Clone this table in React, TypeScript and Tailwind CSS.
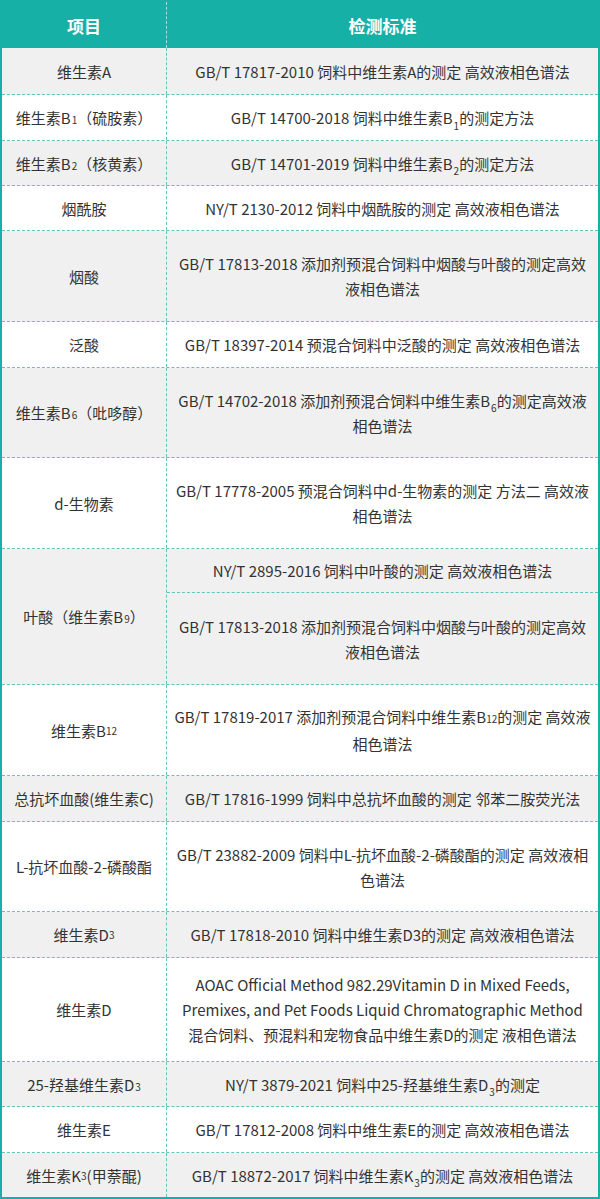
import type { ReactNode } from "react";

const Sub = ({ children }: { children: ReactNode }) => (
  <sub className="text-[10px] leading-none align-[-3px] ml-[1px]">{children}</sub>
);

type Row = { name: ReactNode; std: ReactNode[]; h: string; last?: boolean };

const rows: Row[] = [
  { name: "维生素A", std: ["GB/T 17817-2010 饲料中维生素A的测定 高效液相色谱法"], h: "h-[47px]" },
  {
    name: <>维生素B<Sub>1</Sub>（硫胺素）</>,
    std: [<>GB/T 14700-2018 饲料中维生素B<Sub>1</Sub>的测定方法</>],
    h: "h-[46px]",
  },
  {
    name: <>维生素B<Sub>2</Sub>（核黄素）</>,
    std: [<>GB/T 14701-2019 饲料中维生素B<Sub>2</Sub>的测定方法</>],
    h: "h-[45px]",
  },
  { name: "烟酰胺", std: ["NY/T 2130-2012 饲料中烟酰胺的测定 高效液相色谱法"], h: "h-[45px]" },
  {
    name: "烟酸",
    std: [<>GB/T 17813-2018 添加剂预混合饲料中烟酸与叶酸的测定高效<br />液相色谱法</>],
    h: "h-[91px]",
  },
  { name: "泛酸", std: ["GB/T 18397-2014 预混合饲料中泛酸的测定 高效液相色谱法"], h: "h-[46px]" },
  {
    name: <>维生素B<Sub>6</Sub>（吡哆醇）</>,
    std: [<>GB/T 14702-2018 添加剂预混合饲料中维生素B<Sub>6</Sub>的测定高效液<br />相色谱法</>],
    h: "h-[90px]",
  },
  {
    name: "d-生物素",
    std: [<>GB/T 17778-2005 预混合饲料中d-生物素的测定 方法二 高效液<br />相色谱法</>],
    h: "h-[91px]",
  },
  {
    name: <>叶酸（维生素B<Sub>9</Sub>）</>,
    std: [
      "NY/T 2895-2016 饲料中叶酸的测定 高效液相色谱法",
      <>GB/T 17813-2018 添加剂预混合饲料中烟酸与叶酸的测定高效<br />液相色谱法</>,
    ],
    h: "h-[136px]",
  },
  {
    name: <>维生素B<span className="text-[10px]">12</span></>,
    std: [<>GB/T 17819-2017 添加剂预混合饲料中维生素B<span className="text-[10px]">12</span>的测定 高效液<br />相色谱法</>],
    h: "h-[91px]",
  },
  { name: "总抗坏血酸(维生素C)", std: ["GB/T 17816-1999 饲料中总抗坏血酸的测定 邻苯二胺荧光法"], h: "h-[46px]" },
  {
    name: "L-抗坏血酸-2-磷酸酯",
    std: [<>GB/T 23882-2009 饲料中L-抗坏血酸-2-磷酸酯的测定 高效液相<br />色谱法</>],
    h: "h-[90px]",
  },
  {
    name: <>维生素D<span className="text-[10px]">3</span></>,
    std: ["GB/T 17818-2010 饲料中维生素D3的测定 高效液相色谱法"],
    h: "h-[46px]",
  },
  {
    name: "维生素D",
    std: [
      <>
        AOAC Official Method 982.29Vitamin D in Mixed Feeds,
        <br />
        Premixes, and Pet Foods Liquid Chromatographic Method
        <br />
        混合饲料、预混料和宠物食品中维生素D的测定 液相色谱法
      </>,
    ],
    h: "h-[104px]",
  },
  {
    name: <>25-羟基维生素D<Sub>3</Sub></>,
    std: [<>NY/T 3879-2021 饲料中25-羟基维生素D<Sub>3</Sub>的测定</>],
    h: "h-[45px]",
  },
  { name: "维生素E", std: ["GB/T 17812-2008 饲料中维生素E的测定 高效液相色谱法"], h: "h-[46px]" },
  {
    name: <>维生素K<span className="text-[10px]">3</span>(甲萘醌)</>,
    std: [<>GB/T 18872-2017 饲料中维生素K<Sub>3</Sub>的测定 高效液相色谱法</>],
    h: "h-[44px]",
    last: true,
  },
];

export default function App() {
  return (
    <div
      className="w-[600px] h-[1199px] border-2 border-[#17b0a6] bg-white text-[15px] text-[#333] leading-[25px] overflow-hidden"
      style={{ fontFamily: '"Noto Sans CJK SC", "Noto Sans", sans-serif' }}
    >
      <div className="flex h-[46px] bg-[#17b0a6] text-white font-bold text-[17px]">
        <div className="w-[165px] flex items-center justify-center border-r border-dashed border-white/60">项目</div>
        <div className="flex-1 flex items-center justify-center">检测标准</div>
      </div>
      {rows.map((r, i) => (
        <div
          key={i}
          className={`flex ${r.h} ${i % 2 === 0 ? "bg-[#f0f0f0]" : "bg-white"} ${
            r.last ? "" : "border-b border-dashed border-[#63c4be]"
          }`}
        >
          <div className="w-[165px] shrink-0 flex items-center justify-center text-center whitespace-nowrap border-r border-dashed border-[#63c4be]">
            {r.name}
          </div>
          <div className="flex-1 flex flex-col">
            {r.std.map((s, j) => (
              <div
                key={j}
                className={`flex items-center justify-center text-center whitespace-nowrap ${
                  r.std.length > 1 && j === 0 ? "h-[44px] border-b border-dashed border-[#63c4be]" : "flex-1"
                }`}
              >
                <div>{s}</div>
              </div>
            ))}
          </div>
        </div>
      ))}
    </div>
  );
}
